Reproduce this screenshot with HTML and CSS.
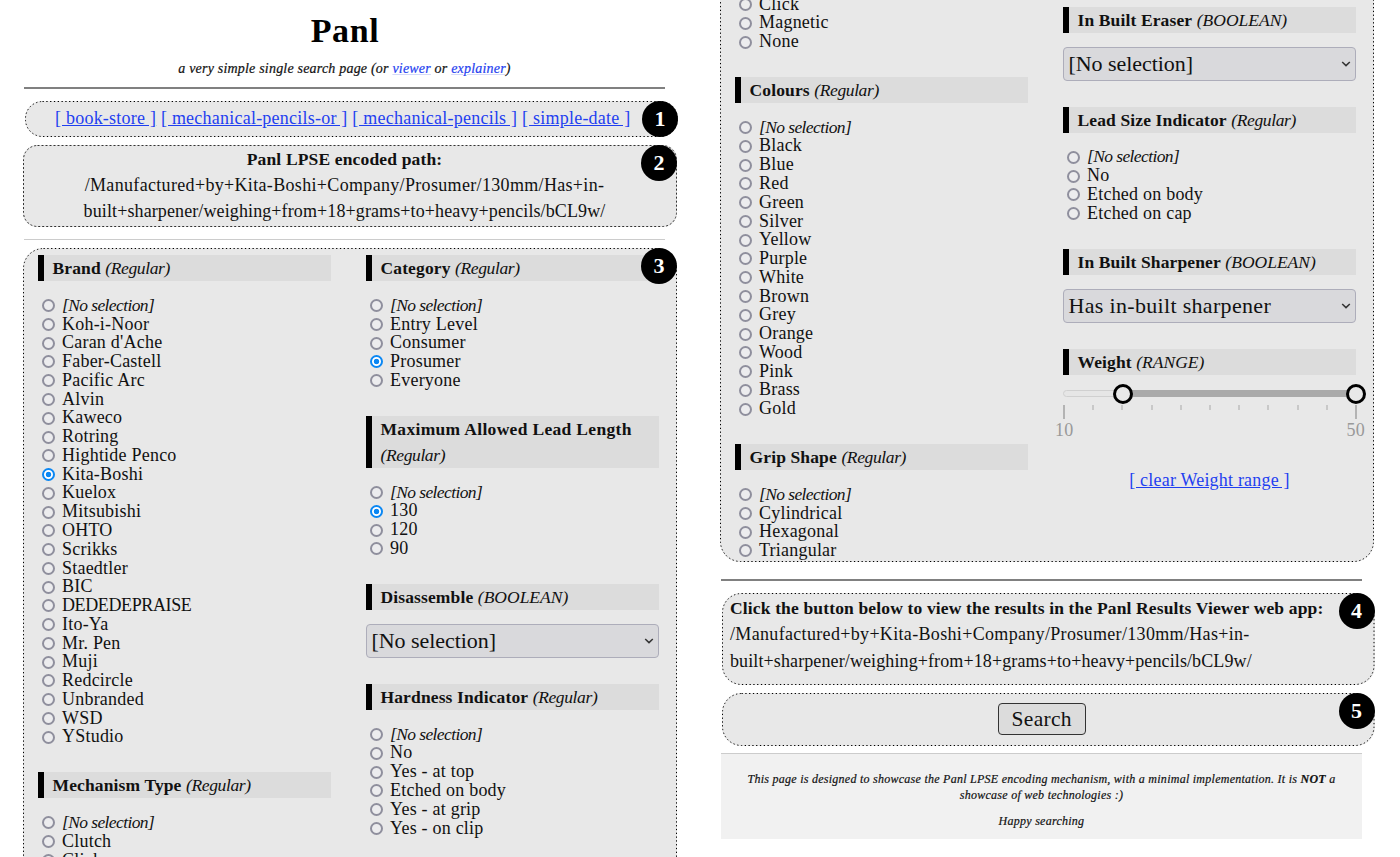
FILE: index.html
```html
<!DOCTYPE html>
<html lang="en">
<head>
<meta charset="utf-8">
<title>Panl</title>
<link rel="stylesheet" href="styles.css">
</head>
<body>
<main class="sheet">
<section class="pane pane-left">
  <h1 class="title"><span>Panl</span></h1>
  <p class="subtitle">a very simple single search page (or <a href="#">viewer</a> or <a href="#">explainer</a>)</p>
  <hr class="rule">
  <nav class="box collections">
    <svg class="outline"><rect x=".5" y=".5" rx="17"/></svg>
    <a href="#">[ book-store ]</a> <a href="#">[ mechanical-pencils-or ]</a> <a href="#">[ mechanical-pencils ]</a> <a href="#">[ simple-date ]</a>
    <span class="badge">1</span>
  </nav>
  <div class="box path">
    <svg class="outline fine"><rect x=".5" y=".5" rx="14"/></svg>
    <strong class="label">Panl LPSE encoded path:</strong><br><span class="loose">/Manufactured+by+Kita-Boshi+Company/Prosumer/130mm/Has+in-</span><br><span class="tight">built+sharpener/weighing+from+18+grams+to+heavy+pencils/bCL9w/</span>
    <span class="badge">2</span>
  </div>
  <hr class="rule thin">
  <div class="box facets facets-left">
    <svg class="outline"><rect x=".5" y=".5" rx="20"/></svg>
    <span class="badge">3</span>
    <div class="column">
      <section class="group">
        <h2><b>Brand</b> <em>(Regular)</em></h2>
        <ul>
          <li><input type="radio"><em>[No selection]</em></li>
          <li><input type="radio">Koh-i-Noor</li>
          <li><input type="radio">Caran d'Ache</li>
          <li><input type="radio">Faber-Castell</li>
          <li><input type="radio">Pacific Arc</li>
          <li><input type="radio">Alvin</li>
          <li><input type="radio">Kaweco</li>
          <li><input type="radio">Rotring</li>
          <li><input type="radio">Hightide Penco</li>
          <li><input type="radio" checked>Kita-Boshi</li>
          <li><input type="radio">Kuelox</li>
          <li><input type="radio">Mitsubishi</li>
          <li><input type="radio">OHTO</li>
          <li><input type="radio">Scrikks</li>
          <li><input type="radio">Staedtler</li>
          <li><input type="radio">BIC</li>
          <li class="caps"><input type="radio">DEDEDEPRAISE</li>
          <li><input type="radio">Ito-Ya</li>
          <li><input type="radio">Mr. Pen</li>
          <li><input type="radio">Muji</li>
          <li><input type="radio">Redcircle</li>
          <li><input type="radio">Unbranded</li>
          <li><input type="radio">WSD</li>
          <li><input type="radio">YStudio</li>
        </ul>
      </section>
      <section class="group">
        <h2><b>Mechanism Type</b> <em>(Regular)</em></h2>
        <ul>
          <li><input type="radio"><em>[No selection]</em></li>
          <li><input type="radio">Clutch</li>
          <li><input type="radio">Click</li>
        </ul>
      </section>
    </div>
    <div class="column">
      <section class="group">
        <h2><b>Category</b> <em>(Regular)</em></h2>
        <ul>
          <li><input type="radio"><em>[No selection]</em></li>
          <li><input type="radio">Entry Level</li>
          <li><input type="radio">Consumer</li>
          <li><input type="radio" checked>Prosumer</li>
          <li><input type="radio">Everyone</li>
        </ul>
      </section>
      <section class="group">
        <h2><b class="long">Maximum Allowed Lead Length</b><br><em>(Regular)</em></h2>
        <ul>
          <li><input type="radio"><em>[No selection]</em></li>
          <li><input type="radio" checked>130</li>
          <li><input type="radio">120</li>
          <li><input type="radio">90</li>
        </ul>
      </section>
      <section class="group">
        <h2><b>Disassemble</b> <em class="type">(BOOLEAN)</em></h2>
        <div class="select">[No selection]<svg viewBox="0 0 10 6"><path d="M1.2 1 5 4.6 8.8 1"/></svg></div>
      </section>
      <section class="group">
        <h2><b>Hardness Indicator</b> <em>(Regular)</em></h2>
        <ul>
          <li><input type="radio"><em>[No selection]</em></li>
          <li><input type="radio">No</li>
          <li><input type="radio">Yes - at top</li>
          <li><input type="radio">Etched on body</li>
          <li><input type="radio">Yes - at grip</li>
          <li><input type="radio">Yes - on clip</li>
        </ul>
      </section>
    </div>
  </div>
</section>

<section class="pane pane-right">
  <div class="box facets facets-right">
    <svg class="outline"><rect x=".5" y="-30" rx="20"/></svg>
    <div class="column">
      <section class="group continued">
        <ul>
          <li><input type="radio">Click</li>
          <li><input type="radio">Magnetic</li>
          <li><input type="radio">None</li>
        </ul>
      </section>
      <section class="group">
        <h2><b>Colours</b> <em>(Regular)</em></h2>
        <ul>
          <li><input type="radio"><em>[No selection]</em></li>
          <li><input type="radio">Black</li>
          <li><input type="radio">Blue</li>
          <li><input type="radio">Red</li>
          <li><input type="radio">Green</li>
          <li><input type="radio">Silver</li>
          <li><input type="radio">Yellow</li>
          <li><input type="radio">Purple</li>
          <li><input type="radio">White</li>
          <li><input type="radio">Brown</li>
          <li><input type="radio">Grey</li>
          <li><input type="radio">Orange</li>
          <li><input type="radio">Wood</li>
          <li><input type="radio">Pink</li>
          <li><input type="radio">Brass</li>
          <li><input type="radio">Gold</li>
        </ul>
      </section>
      <section class="group">
        <h2><b>Grip Shape</b> <em>(Regular)</em></h2>
        <ul>
          <li><input type="radio"><em>[No selection]</em></li>
          <li><input type="radio">Cylindrical</li>
          <li><input type="radio">Hexagonal</li>
          <li><input type="radio">Triangular</li>
        </ul>
      </section>
    </div>
    <div class="column column-last">
      <section class="group">
        <h2><b>In Built Eraser</b> <em class="type">(BOOLEAN)</em></h2>
        <div class="select">[No selection]<svg viewBox="0 0 10 6"><path d="M1.2 1 5 4.6 8.8 1"/></svg></div>
      </section>
      <section class="group">
        <h2><b>Lead Size Indicator</b> <em>(Regular)</em></h2>
        <ul>
          <li><input type="radio"><em>[No selection]</em></li>
          <li><input type="radio">No</li>
          <li><input type="radio">Etched on body</li>
          <li><input type="radio">Etched on cap</li>
        </ul>
      </section>
      <section class="group">
        <h2><b>In Built Sharpener</b> <em class="type">(BOOLEAN)</em></h2>
        <div class="select wide">Has in-built sharpener<svg viewBox="0 0 10 6"><path d="M1.2 1 5 4.6 8.8 1"/></svg></div>
      </section>
      <section class="group">
        <h2><b>Weight</b> <em class="type">(RANGE)</em></h2>
        <div class="slider">
          <div class="track"><div class="fill"></div></div>
          <span class="handle handle-low"></span>
          <span class="handle handle-high"></span>
        </div>
        <div class="ticks"><i></i><i></i><i></i><i></i><i></i><i></i><i></i><i></i><i></i><i></i><i></i></div>
        <div class="limits"><span>10</span><span>50</span></div>
        <a class="clear" href="#">[ clear Weight range ]</a>
      </section>
    </div>
  </div>
  <hr class="rule">
  <div class="box result">
    <svg class="outline"><rect x=".5" y=".5" rx="19"/></svg>
    <strong class="label">Click the button below to view the results in the Panl Results Viewer web app:</strong><br><span class="loose">/Manufactured+by+Kita-Boshi+Company/Prosumer/130mm/Has+in-</span><br><span class="tight">built+sharpener/weighing+from+18+grams+to+heavy+pencils/bCL9w/</span>
    <span class="badge">4</span>
  </div>
  <div class="box submit">
    <svg class="outline"><rect x=".5" y=".5" rx="19"/></svg>
    <button type="button">Search</button>
    <span class="badge">5</span>
  </div>
  <footer>
    <p>This page is designed to showcase the Panl LPSE encoding mechanism, with a minimal implementation. It is <b>NOT</b> a<br>showcase of web technologies :)</p>
    <p>Happy searching</p>
  </footer>
</section>
</main>
</body>
</html>
```
FILE: styles.css
```css
* { box-sizing: border-box; }

body {
  margin: 0;
  background: #fff;
  color: #111;
  font: 18px/26.2px "Liberation Serif", serif;
  letter-spacing: .22px;
}

.sheet {
  display: grid;
  grid-template-columns: 697px 703px;
  height: 857px;
  overflow: hidden;
}

.pane { height: 857px; overflow: hidden; }
.pane-left { padding-left: 23px; }
.pane-right { padding-left: 23px; }

a { color: #1f3ff0; }

.title {
  width: 644px;
  margin: 0;
  padding-top: 11px;
  font-size: 34px;
  line-height: 40px;
  letter-spacing: .6px;
  text-align: center;
  color: #000;
}

.subtitle {
  width: 643px;
  margin: 9px 0 0;
  font-size: 14px;
  line-height: 18px;
  font-style: italic;
  text-align: center;
  letter-spacing: .2px;
  -webkit-text-stroke: .2px;
}
.subtitle a { text-decoration-color: #d5daf8; }

.rule {
  width: 641px;
  height: 2px;
  margin: 9px 0 0 1px;
  border: 0;
  background: #808080;
}
.rule.thin { height: 1px; margin-top: 12px; background: #ccc; }

.box { position: relative; width: 654px; background: #e8e8e8; }

.outline {
  position: absolute;
  inset: 0;
  width: 100%;
  height: 100%;
  pointer-events: none;
}
.outline rect {
  width: calc(100% - 1px);
  height: calc(100% - 1px);
  fill: none;
  stroke: #000;
  stroke-width: 1;
  stroke-dasharray: 1.3 2.5;
}
.outline.fine rect { stroke: #333; stroke-dasharray: 2 2; }

.badge {
  position: absolute;
  top: 0;
  right: 0;
  width: 36px;
  height: 36px;
  border-radius: 50%;
  background: #000;
  color: #fff;
  font-size: 22px;
  font-weight: 700;
  line-height: 35px;
  letter-spacing: 0;
  text-align: center;
}

.label { font-size: 17.5px; letter-spacing: .15px; }
.loose { letter-spacing: .33px; }
.tight { letter-spacing: .11px; }

.collections {
  width: 653px;
  height: 36px;
  margin: 12px 0 0 2px;
  padding: 4px 0 0 30px;
  border-radius: 17px;
  letter-spacing: .23px;
  white-space: nowrap;
}

.path {
  height: 82px;
  margin-top: 8px;
  padding: 1px 11px 0 0;
  border-radius: 14px;
  text-align: center;
}

.facets { display: flex; gap: 35px; padding-left: 15px; }
.facets-left {
  height: 640px;
  margin-top: 8px;
  padding-top: 7px;
  border-radius: 20px 20px 0 0;
}
.facets-right {
  height: 562px;
  border-radius: 0 0 20px 20px;
}
.facets-right .outline rect { height: calc(100% + 29.5px); }

.column { width: 293px; }
.column-last { padding-top: 6.5px; }

.group { margin-bottom: 26px; }
.continued { margin-top: -5.4px; }

h2 {
  margin: 0 0 14.6px;
  padding-left: 8.5px;
  border-left: 6px solid #000;
  background: #dcdcdc;
  font-size: 17.5px;
  font-weight: 400;
  line-height: 26.2px;
  letter-spacing: .13px;
}
h2 em { letter-spacing: -.38px; }
h2 .type { letter-spacing: 0; }
h2 .long { letter-spacing: .32px; }

ul { margin: 0; padding: 0 0 0 4px; list-style: none; }
li {
  display: flex;
  align-items: center;
  height: 18.78px;
  line-height: 18.78px;
  white-space: nowrap;
}
li em { font-size: 17.5px; letter-spacing: -.6px; }
.caps { letter-spacing: -.38px; }

input[type="radio"] {
  appearance: none;
  flex: none;
  width: 13px;
  height: 13px;
  margin: 1px 7px 0 0;
  border: 2px solid #8f8f9d;
  border-radius: 50%;
  background: #ececee;
}
input[type="radio"]:checked {
  border-color: #0b87f3;
  background: radial-gradient(circle, #0b87f3 2.4px, #fff 3.1px);
}

.select {
  display: flex;
  align-items: center;
  justify-content: space-between;
  height: 33.4px;
  padding: 0 4px 0 4.5px;
  border: 1px solid #adadba;
  border-radius: 4px;
  background: #d9d9dc;
  font-size: 22px;
  letter-spacing: -.06px;
}
.select.wide { letter-spacing: .32px; }
.select svg { width: 10px; height: 6px; }
.select path { fill: none; stroke: #333; stroke-width: 1.5; }

.slider { position: relative; height: 20px; margin-top: -6px; padding-top: 6.5px; }
.track {
  height: 7px;
  padding-left: 60px;
  border: 1px solid #d0d0d0;
  border-radius: 4px;
  background: #e6e6e6;
}
.fill { height: 7px; margin: -1px; background: #aaa; }
.handle {
  position: absolute;
  top: 0;
  width: 20px;
  height: 20px;
  border: 3px solid #000;
  border-radius: 50%;
  background: #e8e8e8;
}
.handle-low { left: 50px; }
.handle-high { right: -10px; }

.ticks { display: flex; justify-content: space-between; width: 294px; height: 14px; margin: 1.5px 0 0; }
.ticks i { width: 2px; height: 5px; background: #c8c8c8; }
.ticks i:first-child, .ticks i:last-child { height: 14px; background: #b3b3b3; }

.limits {
  display: flex;
  justify-content: space-between;
  margin: 1px -9px 0 -8px;
  color: #999;
  line-height: 20px;
}
.clear { display: block; margin-top: 27px; text-align: center; letter-spacing: .2px; }

.pane-right > .rule { margin: 17px 0 0 1px; }

.result {
  width: 652.5px;
  height: 92px;
  margin: 12px 0 0 2px;
  padding: 2px 0 0 8px;
  border-radius: 19px;
  line-height: 26.4px;
  white-space: nowrap;
}
.submit {
  width: 652.5px;
  height: 53px;
  margin: 8px 0 0 2px;
  padding: 10px 13px 0 0;
  border-radius: 19px;
  text-align: center;
}
button {
  display: block;
  width: 88px;
  height: 32px;
  margin: 0 auto;
  padding: 0;
  border: 1px solid #333;
  border-radius: 4px;
  background: #dcdcdc;
  color: #111;
  font: 21.5px/28px "Liberation Serif", serif;
  letter-spacing: .3px;
}

footer {
  width: 641px;
  height: 86px;
  margin: 7px 0 0 1px;
  padding-top: 18px;
  border-top: 1px solid #ccc;
  background: #f1f1f1;
  font-size: 12px;
  font-style: italic;
  line-height: 15.5px;
  letter-spacing: .26px;
  text-align: center;
  -webkit-text-stroke: .2px;
}
footer p { margin: 0 0 11px; }
```
